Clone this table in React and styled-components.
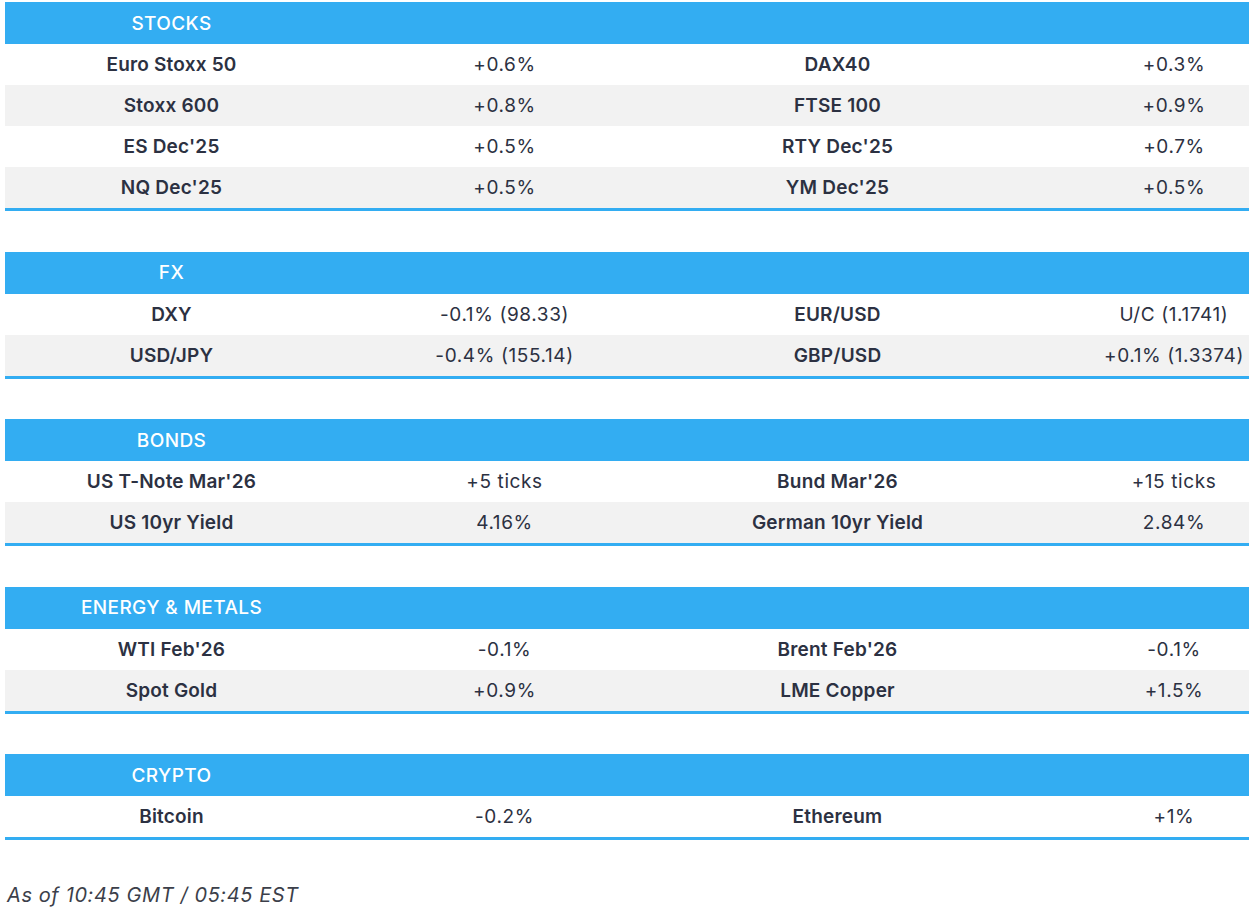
import React from 'react';
import styled, { createGlobalStyle } from 'styled-components';

const GlobalStyle = createGlobalStyle`
    html, body {
        margin: 0;
        padding: 0;
        background: #ffffff;
        overflow: hidden;
    }
    body {
        font-family: Inter, "Noto Sans", "Liberation Sans", sans-serif;
        color: #2c3142;
    }
`;

const Page = styled.div`
    padding: 2px 1px 0 5px;
    width: 1243px;
    overflow: hidden;
`;

const Table = styled.div`
    width: 1340px;
    border-bottom: 3px solid #33adf2;
    margin-bottom: 40.5px;
`;

const Head = styled.div`
    display: grid;
    grid-template-columns: 333px 333px 333px 340px;
    height: 42px;
    align-items: center;
    background: #33adf2;
    color: #ffffff;
    font-size: 19px;
    font-weight: 500;
    letter-spacing: 0.4px;
`;

const HeadCell = styled.div`
    text-align: center;
`;

const Row = styled.div`
    display: grid;
    grid-template-columns: 333px 333px 333px 340px;
    height: 41px;
    align-items: center;
    background: ${(p) => (p.$alt ? '#f2f2f2' : '#ffffff')};
    font-size: 19px;
`;

const Cell = styled.div`
    text-align: center;
    font-weight: ${(p) => (p.$label ? 600 : 400)};
    letter-spacing: ${(p) => (p.$label ? '0.2px' : '0.6px')};
    white-space: nowrap;
`;

const Footer = styled.div`
    margin-top: 43px;
    padding-left: 2px;
    font-size: 20px;
    font-style: italic;
    letter-spacing: 0.6px;
    color: #3c3f4a;
    line-height: 24px;
`;

const sections = [
    {
        title: 'STOCKS',
        rows: [
            ['Euro Stoxx 50', '+0.6%', 'DAX40', '+0.3%'],
            ['Stoxx 600', '+0.8%', 'FTSE 100', '+0.9%'],
            ["ES Dec'25", '+0.5%', "RTY Dec'25", '+0.7%'],
            ["NQ Dec'25", '+0.5%', "YM Dec'25", '+0.5%'],
        ],
    },
    {
        title: 'FX',
        rows: [
            ['DXY', '-0.1% (98.33)', 'EUR/USD', 'U/C (1.1741)'],
            ['USD/JPY', '-0.4% (155.14)', 'GBP/USD', '+0.1% (1.3374)'],
        ],
    },
    {
        title: 'BONDS',
        rows: [
            ["US T-Note Mar'26", '+5 ticks', "Bund Mar'26", '+15 ticks'],
            ['US 10yr Yield', '4.16%', 'German 10yr Yield', '2.84%'],
        ],
    },
    {
        title: 'ENERGY & METALS',
        rows: [
            ["WTI Feb'26", '-0.1%', "Brent Feb'26", '-0.1%'],
            ['Spot Gold', '+0.9%', 'LME Copper', '+1.5%'],
        ],
    },
    {
        title: 'CRYPTO',
        rows: [['Bitcoin', '-0.2%', 'Ethereum', '+1%']],
    },
];

function Section({ title, rows }) {
    return (
        <Table>
            <Head>
                <HeadCell>{title}</HeadCell>
            </Head>
            {rows.map((r, i) => (
                <Row key={i} $alt={i % 2 === 1}>
                    <Cell $label>{r[0]}</Cell>
                    <Cell>{r[1]}</Cell>
                    <Cell $label>{r[2]}</Cell>
                    <Cell>{r[3]}</Cell>
                </Row>
            ))}
        </Table>
    );
}

export default function App() {
    return (
        <>
            <GlobalStyle />
            <Page>
                {sections.map((s) => (
                    <Section key={s.title} title={s.title} rows={s.rows} />
                ))}
                <Footer>As of 10:45 GMT / 05:45 EST</Footer>
            </Page>
        </>
    );
}
